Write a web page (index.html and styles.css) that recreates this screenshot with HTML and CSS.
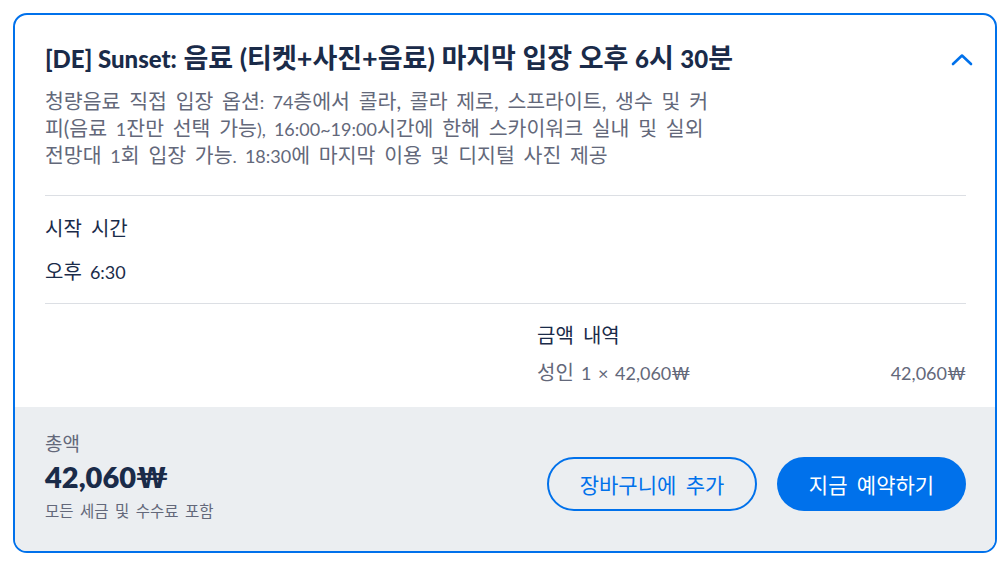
FILE: index.html
```html
<!DOCTYPE html>
<html lang="ko">
<head>
<meta charset="utf-8">
<link rel="stylesheet" href="styles.css">
</head>
<body>
<div class="card">
  <div class="main">
    <div class="head">
      <h2 class="title"><span class="en">[DE] Sunset:</span> 음료 (티켓+사진+음료) 마지막 입장 오후 <span class="en">6</span>시 <span class="en">30</span>분</h2>
      <svg class="chev" width="22" height="13" viewBox="0 0 22 13"><polyline points="2,11 11,2.5 20,11" fill="none" stroke="#0071eb" stroke-width="2.6" stroke-linecap="round" stroke-linejoin="round"/></svg>
    </div>
    <p class="desc">청량음료 직접 입장 옵션<span class="en">: 74</span>층에서 콜라, 콜라 제로, 스프라이트, 생수 및 커피(음료 <span class="en">1</span>잔만 선택 가능<span class="en">), 16:00~19:00</span>시간에 한해 스카이워크 실내 및 실외 전망대 <span class="en">1</span>회 입장 가능<span class="en">. 18:30</span>에 마지막 이용 및 디지털 사진 제공</p>
    <div class="divider"></div>
    <div class="time">
      <div class="label">시작 시간</div>
      <div class="value">오후 <span class="en">6:30</span></div>
    </div>
    <div class="divider"></div>
    <div class="price">
      <div class="label">금액 내역</div>
      <div class="row"><span>성인 <span class="en">1 × 42,060₩</span></span><span><span class="en">42,060₩</span></span></div>
    </div>
  </div>
  <div class="foot">
    <div class="total">
      <div class="t-label">총액</div>
      <div class="t-amount">42,060₩</div>
      <div class="t-note">모든 세금 및 수수료 포함</div>
    </div>
    <div class="actions">
      <button class="btn outline">장바구니에 추가</button>
      <button class="btn solid">지금 예약하기</button>
    </div>
  </div>
</div>
</body>
</html>
```

FILE: styles.css
```css
* { box-sizing: border-box; }
body {
  margin: 0;
  background: #fff;
  font-family: "Lato", "Noto Sans CJK KR", sans-serif;
  color: #1a2b49;
}
.en { line-height: 1; }
.card {
  margin: 13px;
  width: 984px;
  border: 2px solid #0071eb;
  border-radius: 14px;
  overflow: hidden;
  background: #fff;
}
.main { padding: 29px 29px 0 30px; }
.head {
  display: flex;
  justify-content: space-between;
  align-items: flex-start;
}
.title {
  margin: 0;
  font-size: 27px;
  line-height: 28px;
  font-weight: 700;
  color: #1a2b49;
}
.title .en { font-size: 24px; font-weight: 900; }
.chev { margin: 9px -7px 0 0; }
.desc {
  margin: 16px 0 0;
  max-width: 672px;
  font-size: 20.5px;
  line-height: 27px;
  word-spacing: 3.5px;
  color: #63687a;
}
.desc .en { font-size: 18px; }
.divider { height: 1px; background: #dcdfe4; }
.desc + .divider { margin-top: 26px; }
.time { padding: 19px 0 18px; }
.label { font-size: 20px; line-height: 27px; word-spacing: 4px; color: #1a2b49; }
.value { margin-top: 16px; font-size: 20px; line-height: 27px; word-spacing: 3px; color: #1a2b49; }
.value .en { font-size: 18px; }
.price {
  margin-left: 492px;
  padding: 18px 0 21px;
}
.row {
  margin-top: 10px;
  display: flex;
  justify-content: space-between;
  font-size: 20px;
  line-height: 27px;
  word-spacing: 2px;
  color: #63687a;
}
.row .en { font-size: 18px; }
.foot {
  background: #ebeef1;
  padding: 26px 29px 30px 30px;
  display: flex;
  justify-content: space-between;
  align-items: center;
}
.t-label { font-size: 19px; line-height: 22px; color: #63687a; }
.t-amount { margin-top: 5px; font-size: 29px; line-height: 34px; font-weight: 800; color: #1a2b49; }
.t-note { margin-top: 7px; font-size: 15.5px; line-height: 20px; word-spacing: 2.5px; color: #63687a; }
.actions { display: flex; gap: 20px; margin-top: 14px; }
.btn {
  font-family: inherit;
  font-size: 21px;
  word-spacing: 4px;
  height: 54px;
  border-radius: 27px;
  cursor: pointer;
}
.outline {
  width: 210px;
  background: transparent;
  border: 2px solid #0071eb;
  color: #0071eb;
}
.solid {
  width: 189px;
  background: #0071eb;
  border: none;
  color: #fff;
}
```
